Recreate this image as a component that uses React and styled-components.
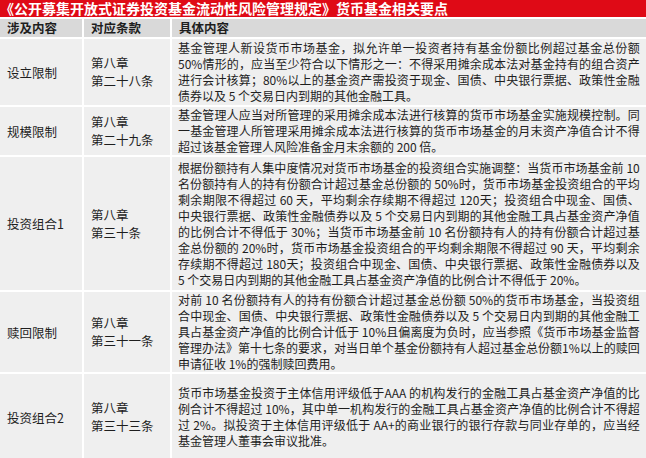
import { Fragment } from "react";
import styled, { createGlobalStyle } from "styled-components";

const GlobalStyle = createGlobalStyle`
  body {
    margin: 0;
    background: #ffffff;
    font-family: "Noto Sans CJK SC", "Noto Sans", sans-serif;
  }
`;

const rows = [
  {
    topic: "设立限制",
    clause: ["第八章", "第二十八条"],
    lines: [
      "基金管理人新设货币市场基金，拟允许单一投资者持有基金份额比例超过基金总份额",
      "50%情形的，应当至少符合以下情形之一：不得采用摊余成本法对基金持有的组合资产",
      "进行会计核算；80%以上的基金资产需投资于现金、国债、中央银行票据、政策性金融",
      "债券以及 5 个交易日内到期的其他金融工具。",
    ],
  },
  {
    topic: "规模限制",
    clause: ["第八章", "第二十九条"],
    lines: [
      "基金管理人应当对所管理的采用摊余成本法进行核算的货币市场基金实施规模控制。同",
      "一基金管理人所管理采用摊余成本法进行核算的货币市场基金的月末资产净值合计不得",
      "超过该基金管理人风险准备金月末余额的 200 倍。",
    ],
  },
  {
    topic: "投资组合1",
    clause: ["第八章", "第三十条"],
    lines: [
      "根据份额持有人集中度情况对货币市场基金的投资组合实施调整：当货币市场基金前 10",
      "名份额持有人的持有份额合计超过基金总份额的 50%时，货币市场基金投资组合的平均",
      "剩余期限不得超过 60 天，平均剩余存续期不得超过 120天；投资组合中现金、国债、",
      "中央银行票据、政策性金融债券以及 5 个交易日内到期的其他金融工具占基金资产净值",
      "的比例合计不得低于 30%；当货币市场基金前 10 名份额持有人的持有份额合计超过基",
      "金总份额的 20%时，货币市场基金投资组合的平均剩余期限不得超过 90 天，平均剩余",
      "存续期不得超过 180天；投资组合中现金、国债、中央银行票据、政策性金融债券以及",
      "5 个交易日内到期的其他金融工具占基金资产净值的比例合计不得低于 20%。",
    ],
  },
  {
    topic: "赎回限制",
    clause: ["第八章", "第三十一条"],
    lines: [
      "对前 10 名份额持有人的持有份额合计超过基金总份额 50%的货币市场基金，当投资组",
      "合中现金、国债、中央银行票据、政策性金融债券以及 5 个交易日内到期的其他金融工",
      "具占基金资产净值的比例合计低于 10%且偏离度为负时，应当参照《货币市场基金监督",
      "管理办法》第十七条的要求，对当日单个基金份额持有人超过基金总份额1%以上的赎回",
      "申请征收 1%的强制赎回费用。",
    ],
  },
  {
    topic: "投资组合2",
    clause: ["第八章", "第三十三条"],
    lines: [
      "货币市场基金投资于主体信用评级低于AAA 的机构发行的金融工具占基金资产净值的比",
      "例合计不得超过 10%，其中单一机构发行的金融工具占基金资产净值的比例合计不得超",
      "过 2%。拟投资于主体信用评级低于 AA+的商业银行的银行存款与同业存单的，应当经",
      "基金管理人董事会审议批准。",
    ],
  },
];

const Page = styled.div`
  width: 646px;
  height: 458px;
  overflow: hidden;
  background: #ffffff;
`;

const TitleBar = styled.div`
  height: 17px;
  margin-bottom: 2px;
  background: #df0a16;
  color: #ffffff;
  font-size: 14px;
  font-weight: 700;
  line-height: 17px;
  white-space: nowrap;
  display: flex;
  align-items: center;
`;

const Table = styled.div`
  display: grid;
  grid-template-columns: 82px 86px 1fr;
  grid-template-rows: 18px 66px 48px 133px 80px 86px;
  gap: 2px;
  background: #ffffff;
`;

const HeaderCell = styled.div`
  background: #d9d9d9;
  color: #1e1e1e;
  font-size: 12.5px;
  font-weight: 700;
  line-height: 18px;
  padding-left: 7px;
  white-space: nowrap;
`;

const Cell = styled.div`
  background: #efefef;
  color: #1e1e1e;
  font-size: 12.5px;
  line-height: 17px;
  display: flex;
  flex-direction: column;
  justify-content: center;
  padding-left: 7px;
  white-space: nowrap;
`;

const ClauseLine = styled.div`
  height: 18px;
  line-height: 18px;
`;

const TextCell = styled(Cell)`
  padding: 0 10px 0 6px;
  font-size: 12px;
  line-height: 16px;
`;

const Line = styled.div`
  height: 16px;
  text-align: justify;
  text-align-last: ${(p) => (p.$last ? "left" : "justify")};
`;

export default function App() {
  return (
    <Page>
      <GlobalStyle />
      <TitleBar>《公开募集开放式证券投资基金流动性风险管理规定》货币基金相关要点</TitleBar>
      <Table>
        <HeaderCell>涉及内容</HeaderCell>
        <HeaderCell>对应条款</HeaderCell>
        <HeaderCell>具体内容</HeaderCell>
        {rows.map((row) => (
          <Fragment key={row.topic}>
            <Cell>{row.topic}</Cell>
            <Cell>
              {row.clause.map((c) => (
                <ClauseLine key={c}>{c}</ClauseLine>
              ))}
            </Cell>
            <TextCell>
              {row.lines.map((line, i) => (
                <Line key={i} $last={i === row.lines.length - 1}>
                  {line}
                </Line>
              ))}
            </TextCell>
          </Fragment>
        ))}
      </Table>
    </Page>
  );
}
